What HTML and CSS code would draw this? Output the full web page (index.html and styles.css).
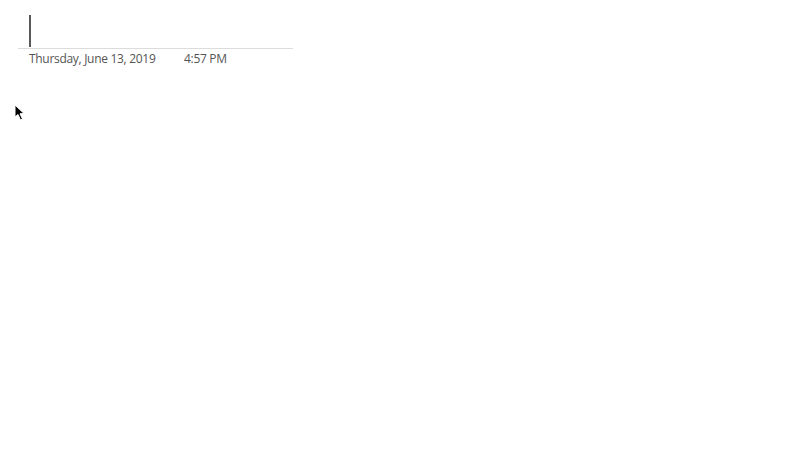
FILE: index.html
```html
<!DOCTYPE html>
<html>
<head>
<meta charset="utf-8">
<link rel="stylesheet" href="styles.css">
</head>
<body>
<div class="page">
  <div class="title">
    <span class="caret"></span>
  </div>
  <div class="meta">
    <span class="date">Thursday, June 13, 2019</span>
    <span class="time">4:57 PM</span>
  </div>
</div>
<svg class="pointer" width="12" height="18" viewBox="0 0 12 18">
  <path d="M1 1 L1 13 L4 10.5 L6.5 16 L8.5 15 L6 9.8 L10 9.5 Z" fill="#000" stroke="#fff" stroke-width="1"/>
</svg>
</body>
</html>
```
FILE: styles.css
```css
html, body {
  margin: 0;
  padding: 0;
  background: #fff;
}
.page {
  margin-left: 18px;
  padding-top: 15px;
  width: 275px;
}
.title {
  height: 33px;
  border-bottom: 1px solid #dcdcdc;
  padding-left: 11px;
}
.caret {
  display: block;
  width: 2px;
  height: 32px;
  background: #595959;
}
.meta {
  display: flex;
  padding-left: 11px;
  padding-top: 1px;
  font-family: "Open Sans", "Liberation Sans", sans-serif;
  font-size: 12px;
  letter-spacing: -0.3px;
  color: #555;
  line-height: 17px;
}
.date {
  width: 155px;
}
.pointer {
  position: absolute;
  left: 14px;
  top: 104px;
}
```
